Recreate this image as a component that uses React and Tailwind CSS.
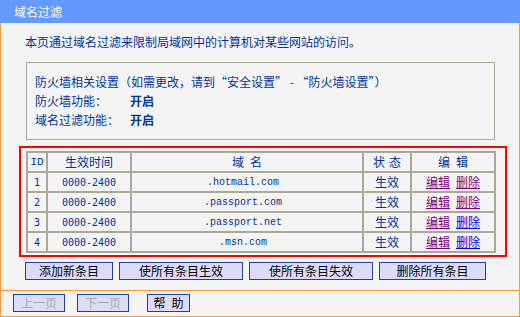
import React from 'react';

const rows = [
  { id: 1, time: '0000-2400', domain: '.hotmail.com', delVisited: true },
  { id: 2, time: '0000-2400', domain: '.passport.com', delVisited: true },
  { id: 3, time: '0000-2400', domain: '.passport.net', delVisited: false },
  { id: 4, time: '0000-2400', domain: '.msn.com', delVisited: false },
];

function Cell({ className = '', children }) {
  return (
    <div className={`h-[20px] border border-[#aca899] flex items-center justify-center ${className}`}>
      {children}
    </div>
  );
}

function Spaced({ a, b, gap = 'gap-[6px]' }) {
  return (
    <span className={`flex ${gap}`}>
      <span>{a}</span>
      <span>{b}</span>
    </span>
  );
}

function Btn({ className = '', children, disabled }) {
  return (
    <button
      className={`h-[18px] bg-[#dcdcfa] border border-[#1f3fa8] flex items-center justify-center text-[12px] leading-[16px] ${
        disabled ? 'text-[#a8a8a8]' : 'text-black'
      } ${className}`}
    >
      {children}
    </button>
  );
}

export default function App() {
  return (
    <div className="w-[520px] h-[317px] bg-[#f4f4f4] flex flex-col overflow-hidden font-['Noto_Sans_CJK_SC',sans-serif] text-[12px] text-[#003399]">
      {/* title bar */}
      <div className="h-[23px] shrink-0 bg-[#6699ff] text-white text-[12px] leading-[23px] pl-[14px]">域名过滤</div>

      {/* main area */}
      <div className="h-[267px] shrink-0 border-x border-[#ff9933] flex flex-col items-start">
        <p className="mt-[12px] ml-[24px] leading-[14px]">本页通过域名过滤来限制局域网中的计算机对某些网站的访问。</p>

        <div className="mt-[13px] ml-[25px] w-[469px] border border-[#aaa9a0] pt-[9px] pb-[10px] pl-[8px] leading-[19px]">
          <div>防火墙相关设置（如需更改，请到“安全设置” - “防火墙设置”）</div>
          <div className="flex">
            <span className="w-[95px]">防火墙功能：</span>
            <span className="font-bold">开启</span>
          </div>
          <div className="flex">
            <span className="w-[95px]">域名过滤功能：</span>
            <span className="font-bold">开启</span>
          </div>
        </div>

        <div className="mt-[6px] ml-[18px] w-[488px] border-2 border-[#ff0000] pt-[3px] pb-[2px] pl-[5px]">
          <div className="w-[470px] border border-[#aca899]">
            <div className="flex">
              <Cell className="w-[20px] font-['Liberation_Mono',monospace] text-[11px]">ID</Cell>
              <Cell className="w-[84px]">生效时间</Cell>
              <Cell className="w-[232px]"><Spaced a="域" b="名" /></Cell>
              <Cell className="w-[48px]"><Spaced a="状" b="态" gap="gap-[4px]" /></Cell>
              <Cell className="w-[84px]"><Spaced a="编" b="辑" /></Cell>
            </div>
            {rows.map((r) => (
              <div key={r.id} className="flex">
                <Cell className="w-[20px] font-['DejaVu_Sans_Mono',monospace] text-[10px]">{r.id}</Cell>
                <Cell className="w-[84px] font-['DejaVu_Sans_Mono',monospace] text-[10px]">{r.time}</Cell>
                <Cell className="w-[232px] font-['Liberation_Mono',monospace] text-[10px] pr-[8px]">{r.domain}</Cell>
                <Cell className="w-[48px]">生效</Cell>
                <Cell className="w-[84px]">
                  <span className="flex gap-[6px]">
                    <a className="underline text-[#800080]">编辑</a>
                    <a className={`underline ${r.delVisited ? 'text-[#800080]' : 'text-[#0000ff]'}`}>删除</a>
                  </span>
                </Cell>
              </div>
            ))}
          </div>
        </div>

        <div className="mt-[5px] ml-[24px] flex gap-[6px]">
          <Btn className="w-[88px]">添加新条目</Btn>
          <Btn className="w-[124px]">使所有条目生效</Btn>
          <Btn className="w-[124px]">使所有条目失效</Btn>
          <Btn className="w-[107px]">删除所有条目</Btn>
        </div>
      </div>

      {/* bottom nav */}
      <div className="h-[27px] shrink-0 border border-[#ff9933] pt-[3px] pl-[12px] flex items-start">
        <Btn className="w-[52px]" disabled>上一页</Btn>
        <Btn className="w-[52px] ml-[12px]" disabled>下一页</Btn>
        <Btn className="w-[43px] ml-[18px]"><Spaced a="帮" b="助" /></Btn>
      </div>
    </div>
  );
}
